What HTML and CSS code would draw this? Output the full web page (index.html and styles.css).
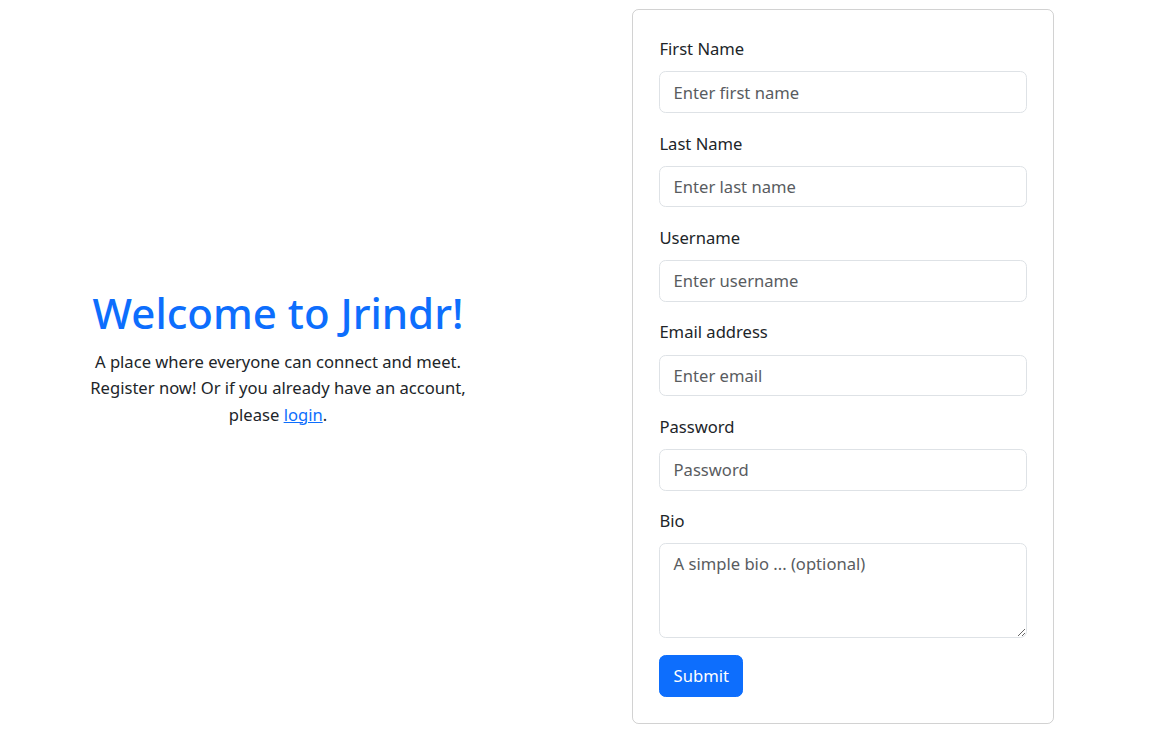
FILE: index.html
```html
<!DOCTYPE html>
<html lang="en">
<head>
<meta charset="utf-8">
<title>Jrindr - Register</title>
<link rel="stylesheet" href="styles.css">
</head>
<body>
<main class="page">
  <section class="intro">
    <h1 class="intro-title">Welcome to Jrindr!</h1>
    <p class="intro-text">A place where everyone can connect and meet.<br>Register now! Or if you already have an account,<br>please <a href="#" class="link">login</a>.</p>
  </section>
  <form class="card">
    <div class="field">
      <label class="label" for="fn">First Name</label>
      <input class="control" id="fn" type="text" placeholder="Enter first name">
    </div>
    <div class="field">
      <label class="label" for="ln">Last Name</label>
      <input class="control" id="ln" type="text" placeholder="Enter last name">
    </div>
    <div class="field">
      <label class="label" for="un">Username</label>
      <input class="control" id="un" type="text" placeholder="Enter username">
    </div>
    <div class="field">
      <label class="label" for="em">Email address</label>
      <input class="control" id="em" type="email" placeholder="Enter email">
    </div>
    <div class="field">
      <label class="label" for="pw">Password</label>
      <input class="control" id="pw" type="password" placeholder="Password">
    </div>
    <div class="field">
      <label class="label" for="bio">Bio</label>
      <textarea class="control textarea" id="bio" rows="3" placeholder="A simple bio ... (optional)"></textarea>
    </div>
    <button class="btn" type="button">Submit</button>
  </form>
</main>
</body>
</html>
```
FILE: styles.css
```css
* { box-sizing: border-box; }
html, body { margin: 0; padding: 0; background: #fff; }
body {
  font-family: "Noto Sans", "Open Sans", sans-serif;
  font-size: 16.6px;
  line-height: 26.4px;
  color: #212529;
}
.page {
  display: flex;
  align-items: center;
  padding: 8.8px 0 5px 0;
}
.intro {
  flex: 0 0 556px;
  text-align: center;
  padding-bottom: 18px;
}
.intro-title {
  margin: 0 0 8.8px 0;
  font-size: 42px;
  font-weight: 500;
  line-height: 52.8px;
  color: #0d6efd;
}
.intro-text {
  margin: 0;
  line-height: 26.4px;
}
.link { color: #0d6efd; text-decoration: underline; }
.card {
  margin-left: 76px;
  width: 422px;
  border: 1px solid rgba(0,0,0,0.175);
  border-radius: 6.6px;
  padding: 26.4px;
  display: flex;
  flex-direction: column;
}
.field { margin-bottom: 17.6px; display: flex; flex-direction: column; }
.label { margin-bottom: 8.8px; line-height: 26.4px; }
.control {
  display: block;
  width: 100%;
  height: 41.6px;
  padding: 6.6px 13.2px;
  font: inherit;
  line-height: 26.4px;
  color: #212529;
  background: #fff;
  border: 1px solid #dee2e6;
  border-radius: 6.6px;
  outline: none;
}
.control::placeholder { color: #595c5f; opacity: 1; }
.textarea { height: 94.4px; resize: vertical; }
.btn {
  align-self: flex-start;
  font: inherit;
  line-height: 26.4px;
  color: #fff;
  background: #0d6efd;
  border: 1px solid #0d6efd;
  border-radius: 6.6px;
  padding: 6.6px 13.2px;
  height: 41.6px;
  cursor: pointer;
}
```
